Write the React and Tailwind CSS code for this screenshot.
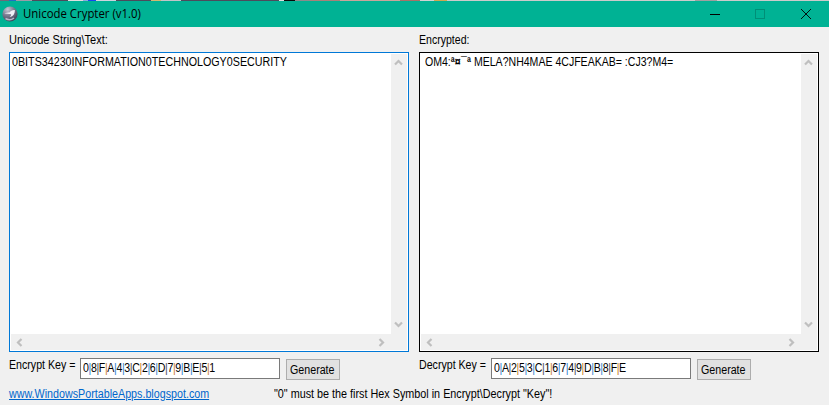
const segments = [
  ['w-[9px]', 'bg-[#6d6b78]'],
  ['w-[7px]', 'bg-[#1f6fc4]'],
  ['w-[16px]', 'bg-[#9b9ba6]'],
  ['w-[36px]', 'bg-[#4d4b5c]'],
  ['w-[15px]', 'bg-[#dedede]'],
  ['w-[5px]', 'bg-[#8aa8dd]'],
  ['w-[8px]', 'bg-[#1746f0]'],
  ['w-[20px]', 'bg-[#cdd3dd]'],
  ['w-[35px]', 'bg-[#4d4b5c]'],
  ['w-[10px]', 'bg-[#d0b870]'],
  ['w-[20px]', 'bg-[#c0c4c8]'],
  ['w-[98px]', 'bg-[#4d4b5c]'],
  ['w-[5px]', 'bg-[#dedede]'],
  ['w-[11px]', 'bg-[#080808]'],
  ['w-[15px]', 'bg-[#8b8b8b]'],
  ['w-[30px]', 'bg-[#a98078]'],
  ['w-[60px]', 'bg-[#c9a59b]'],
  ['w-[20px]', 'bg-[#a97167]'],
  ['w-[14px]', 'bg-[#d2d2d2]'],
  ['w-[13px]', 'bg-[#d0a850]'],
  ['w-[248px]', 'bg-[#cbcbcb]'],
  ['w-[22px]', 'bg-[#a0a0a0]'],
  ['flex-1', 'bg-[#cbcbcb]'],
];

function Chevron({ className }) {
  return (
    <svg className={className} width="9" height="9" viewBox="0 0 9 9" fill="none" stroke="#bfbfbf" strokeWidth="2.2">
      <path d="M1 6.500 4.500 3 8 6.500" />
    </svg>
  );
}

function Text({ className, children }) {
  return <span className={`inline-block origin-left ${className}`}>{children}</span>;
}

function TextArea({ border, children }) {
  return (
    <div className={`flex h-[300px] w-[400px] flex-col border bg-white p-px ${border}`}>
      <div className="flex flex-1">
        <div className="flex-1 pt-px">{children}</div>
        <div className="flex w-[16px] flex-col items-start justify-between bg-[#f0f0f0] pt-[4px] pb-[5px] pl-[3px]">
          <Chevron />
          <Chevron className="rotate-180" />
        </div>
      </div>
      <div className="flex h-[16px] items-center justify-between bg-[#f0f0f0] pr-[21px] pl-[4px]">
        <Chevron className="-rotate-90" />
        <Chevron className="rotate-90" />
      </div>
    </div>
  );
}

const barColors = ['text-[#2f7fd0]', 'text-[#2f7fd0]', 'text-[#4a4a55]', 'text-[#c97a25]'];

function KeyRow({ label, value, labelClass }) {
  return (
    <div className="flex w-[410px] shrink-0 items-start">
      <div className={`shrink-0 leading-[14px] ${labelClass}`}>
        <Text className="scale-x-[0.885]">{label}</Text>
      </div>
      <div className="h-[21px] w-[200px] shrink-0 border border-[#7a7a7a] bg-white pt-[2px] pl-[2px] leading-[14px]">
        <Text className="scale-x-[0.885] tracking-[-0.43px]">
          {value.split('|').map((symbol, i) => (
            <span key={i}>
              {i > 0 && <span className={barColors[i % 4]}>|</span>}
              {symbol}
            </span>
          ))}
        </Text>
      </div>
      <div className="mt-px ml-[6px] h-[21px] w-[54px] shrink-0 border border-[#adadad] bg-[#e1e1e1] pt-[3px] pl-[3px] leading-[14px]">
        <Text className="scale-x-[0.89]">Generate</Text>
      </div>
    </div>
  );
}

export default function App() {
  return (
    <div className="flex h-[405px] w-[829px] flex-col overflow-hidden bg-[#f0f0f0] font-['Liberation_Sans',Arial,sans-serif] text-[12px] whitespace-pre text-black">
      <div className="flex h-px w-full">
        {segments.map(([w, c], i) => (
          <div key={i} className={`${w} ${c}`} />
        ))}
      </div>
      <header className="flex h-[26px] items-center bg-[#00b294]">
        <svg className="ml-[2px]" width="16" height="16" viewBox="0 0 16 16">
          <defs>
            <radialGradient id="orb" cx="0.35" cy="0.2" r="0.85">
              <stop offset="0" stopColor="#c4c6d4" />
              <stop offset="0.5" stopColor="#77788e" />
              <stop offset="1" stopColor="#3d3f54" />
            </radialGradient>
          </defs>
          <circle cx="8" cy="8" r="7.6" fill="url(#orb)" />
          <path d="M2.500 7.500C4 6.500 6 6.500 7.500 6.500 8.500 5 10.500 3.800 12.800 4 13 7.500 11.500 10.500 7.500 11 9 9.800 9.300 9 9 8.200 7 7.800 5 7.800 2.500 7.500Z" fill="#f0f1f7" />
          <path d="M3.500 12.500c3 1.800 6 1.500 8.500-.5" stroke="#b4b6c8" strokeWidth="1.500" fill="none" />
        </svg>
        <div className="ml-[5px] flex-1 font-['Open_Sans','Noto_Sans',sans-serif] leading-[16px]">
          <Text className="scale-x-[0.95]">Unicode Crypter (v1.0)</Text>
        </div>
        <svg width="120" height="26" viewBox="0 0 120 26" fill="none" shapeRendering="crispEdges">
          <path d="M1 13.500h10" stroke="#000" />
          <path d="M46.500 8.500h9v9h-9z" stroke="#008f77" />
          <path d="m92 8 10 10m0-10-10 10" stroke="#000" shapeRendering="auto" strokeWidth="0.900" />
        </svg>
      </header>
      <main className="px-[9px] pt-[6px]">
        <div className="flex h-[19px] leading-[14px]">
          <div className="w-[410px]">
            <Text className="scale-x-[0.92]">Unicode String\Text:</Text>
          </div>
          <Text className="scale-x-[0.88]">Encrypted:</Text>
        </div>
        <div className="flex gap-[10px]">
          <TextArea border="border-[#0078d7]">
            <div className="w-[370px] pl-px leading-[14px]">
              <Text className="scale-x-[0.893]">0BITS34230INFORMATION0TECHNOLOGY0SECURITY</Text>
            </div>
          </TextArea>
          <TextArea border="border-black">
            <div className="w-[370px] pl-[4px] leading-[14px]">
              <Text className="scale-x-[0.879]">
                OM4:<span className="font-bold tracking-[0.2px]">ª¤¯ª</span> MELA?NH4MAE 4CJFEAKAB= :CJ3?M4=
              </Text>
            </div>
          </TextArea>
        </div>
        <div className="mt-[6px] flex h-[29px]">
          <KeyRow label="Encrypt Key =" value="0|8|F|A|4|3|C|2|6|D|7|9|B|E|5|1" labelClass="w-[71px]" />
          <KeyRow label="Decrypt Key =" value="0|A|2|5|3|C|1|6|7|4|9|D|B|8|F|E" labelClass="w-[72px]" />
        </div>
        <div className="flex leading-[14px]">
          <div className="w-[265px]">
            <Text className="scale-x-[0.893] text-[#0066cc] underline">www.WindowsPortableApps.blogspot.com</Text>
          </div>
          <Text className="scale-x-[0.9]">"0" must be the first Hex Symbol in Encrypt\Decrypt "Key"!</Text>
        </div>
      </main>
    </div>
  );
}
